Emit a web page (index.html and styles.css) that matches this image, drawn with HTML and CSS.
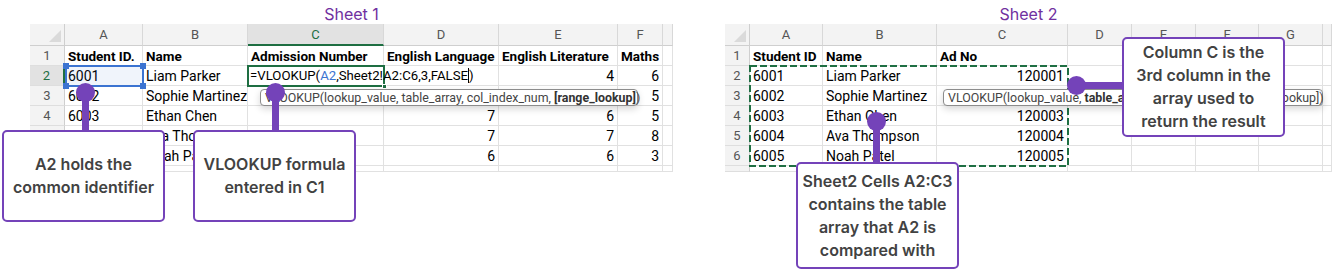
FILE: index.html
```html
<!DOCTYPE html>
<html>
<head>
<meta charset="utf-8">
<link rel="stylesheet" href="styles.css">
</head>
<body>
<div class="page">
  <section class="panel panel-1">
    <h2 class="title">Sheet 1</h2>
    <div class="sheet sheet-1">
      <div class="hd corner"></div>
      <div class="hd">A</div><div class="hd">B</div><div class="hd active-col">C</div><div class="hd">D</div><div class="hd">E</div><div class="hd">F</div><div class="hd"></div>

      <div class="rn">1</div>
      <div class="c b">Student ID.</div><div class="c b">Name</div><div class="c b">Admission Number</div><div class="c b">English Language</div><div class="c b">English Literature</div><div class="c b">Maths</div><div class="c"></div>

      <div class="rn active-row">2</div>
      <div class="c">6001</div><div class="c">Liam Parker</div><div class="c"></div><div class="c"></div><div class="c n">4</div><div class="c n">6</div><div class="c"></div>

      <div class="rn">3</div>
      <div class="c">6002</div><div class="c">Sophie Martinez</div><div class="c"></div><div class="c"></div><div class="c"></div><div class="c n">5</div><div class="c"></div>

      <div class="rn">4</div>
      <div class="c">6003</div><div class="c">Ethan Chen</div><div class="c"></div><div class="c n">7</div><div class="c n">6</div><div class="c n">5</div><div class="c"></div>

      <div class="rn">5</div>
      <div class="c">6004</div><div class="c">Ava Thompson</div><div class="c"></div><div class="c n">7</div><div class="c n">7</div><div class="c n">8</div><div class="c"></div>

      <div class="rn">6</div>
      <div class="c">6005</div><div class="c">Noah Patel</div><div class="c"></div><div class="c n">6</div><div class="c n">6</div><div class="c n">3</div><div class="c"></div>

      <div class="rn">7</div>
      <div class="c"></div><div class="c"></div><div class="c"></div><div class="c"></div><div class="c"></div><div class="c"></div><div class="c"></div>
    </div>

    <div class="ref-box">
      <span class="h tl"></span><span class="h tr"></span><span class="h bl"></span><span class="h br"></span>
    </div>
    <div class="editor">
      <span class="formula">=VLOOKUP(<span class="ref">A2</span>,Sheet2!A2:C6,3,FALSE<span class="caret"></span>)</span>
      <span class="fill-handle"></span>
    </div>
    <div class="tip tip-1">VLOOKUP(lookup_value, table_array, col_index_num, <b>[range_lookup]</b>)</div>

    <div class="stem stem-1"></div><div class="dot dot-1"></div>
    <div class="stem stem-2"></div><div class="dot dot-2"></div>
    <div class="callout callout-1">A2 holds the<br>common identifier</div>
    <div class="callout callout-2">VLOOKUP formula<br>entered in C1</div>
  </section>

  <section class="panel panel-2">
    <h2 class="title">Sheet 2</h2>
    <div class="sheet sheet-2">
      <div class="hd corner"></div>
      <div class="hd">A</div><div class="hd">B</div><div class="hd">C</div><div class="hd">D</div><div class="hd">E</div><div class="hd">F</div><div class="hd">G</div><div class="hd"></div>

      <div class="rn">1</div>
      <div class="c b">Student ID</div><div class="c b">Name</div><div class="c b">Ad No</div><div class="c"></div><div class="c"></div><div class="c"></div><div class="c"></div><div class="c"></div>

      <div class="rn">2</div>
      <div class="c">6001</div><div class="c">Liam Parker</div><div class="c n">120001</div><div class="c"></div><div class="c"></div><div class="c"></div><div class="c"></div><div class="c"></div>

      <div class="rn">3</div>
      <div class="c">6002</div><div class="c">Sophie Martinez</div><div class="c n">120002</div><div class="c"></div><div class="c"></div><div class="c"></div><div class="c"></div><div class="c"></div>

      <div class="rn">4</div>
      <div class="c">6003</div><div class="c">Ethan Chen</div><div class="c n">120003</div><div class="c"></div><div class="c"></div><div class="c"></div><div class="c"></div><div class="c"></div>

      <div class="rn">5</div>
      <div class="c">6004</div><div class="c">Ava Thompson</div><div class="c n">120004</div><div class="c"></div><div class="c"></div><div class="c"></div><div class="c"></div><div class="c"></div>

      <div class="rn">6</div>
      <div class="c">6005</div><div class="c">Noah Patel</div><div class="c n">120005</div><div class="c"></div><div class="c"></div><div class="c"></div><div class="c"></div><div class="c"></div>

      <div class="rn">7</div>
      <div class="c"></div><div class="c"></div><div class="c"></div><div class="c"></div><div class="c"></div><div class="c"></div><div class="c"></div><div class="c"></div>
    </div>

    <svg class="marquee" width="320" height="102" viewBox="0 0 320 102">
      <rect x="1" y="1" width="318" height="100" fill="none" stroke="#1f6f43" stroke-width="2" stroke-dasharray="7 3"/>
    </svg>
    <div class="tip tip-2">VLOOKUP(lookup_value, <b>table_array</b>, col_index_num, [range_lookup])</div>

    <div class="stem stem-3"></div><div class="dot dot-3"></div>
    <div class="arm arm-4"></div><div class="dot dot-4"></div>
    <div class="callout callout-3">Sheet2 Cells A2:C3<br>contains the table<br>array that A2 is<br>compared with</div>
    <div class="callout callout-4">Column C is the<br>3rd column in the<br>array used to<br>return the result</div>
  </section>
</div>
</body>
</html>
```

FILE: styles.css
```css
* { box-sizing: border-box; }

html, body {
  margin: 0;
  padding: 0;
  background: #ffffff;
}

body {
  width: 1332px;
  height: 272px;
  overflow: hidden;
}

.page {
  display: flex;
  gap: 52px;
  padding-left: 30px;
  height: 272px;
}

.panel {
  position: relative;
  flex: none;
}

.panel-1 { width: 643px; }
.panel-2 { width: 607px; }

.title {
  margin: 0;
  height: 24px;
  padding-top: 4px;
  font-family: Inter, "Noto Sans", sans-serif;
  font-weight: 400;
  font-size: 16px;
  line-height: 20px;
  color: #7030a0;
  text-align: center;
}

.sheet {
  display: grid;
  grid-template-rows: 22px repeat(6, 20px) 6px;
  overflow: hidden;
  font-family: Roboto, "Liberation Sans", sans-serif;
  font-size: 14px;
  color: #000000;
}

.sheet-1 { grid-template-columns: 35px 78px 105px 136px 115px 119px 45px 10px; }
.sheet-2 { grid-template-columns: 25px 73px 114px 131px 64px 64px 63px 64px 9px; }

.hd {
  background: #f3f3f3;
  border-right: 1px solid #d8d8d8;
  border-bottom: 1px solid #cfcfcf;
  color: #555555;
  font-size: 13px;
  line-height: 21px;
  text-align: center;
}

.hd.corner {
  position: relative;
  border-right: 1px solid #cfcfcf;
}

.hd.corner::after {
  content: "";
  position: absolute;
  right: 3px;
  bottom: 3px;
  width: 0;
  height: 0;
  border-left: 12px solid transparent;
  border-bottom: 12px solid #dadada;
}

.hd.active-col {
  background: #e2e2e2;
  border-bottom: 2px solid #1e6e42;
  color: #1e6e42;
}

.rn {
  background: #f3f3f3;
  border-right: 1px solid #cfcfcf;
  border-bottom: 1px solid #dedede;
  color: #555555;
  font-size: 13px;
  line-height: 19px;
  text-align: center;
  overflow: hidden;
}

.rn.active-row {
  background: #e2e2e2;
  border-right: 2px solid #1e6e42;
  color: #1e6e42;
}

.c {
  border-right: 1px solid #e1e1e1;
  border-bottom: 1px solid #e1e1e1;
  padding: 0 3px;
  line-height: 20px;
  white-space: nowrap;
  overflow: hidden;
}

.c.b { font-weight: 700; font-size: 13.5px; }
.c.n { text-align: right; }

/* A2 reference highlight */
.ref-box {
  position: absolute;
  left: 35px;
  top: 65px;
  width: 79px;
  height: 22px;
  border: 2px solid #3b73d1;
  background: rgba(59, 115, 209, 0.08);
}

.ref-box .h {
  position: absolute;
  width: 6px;
  height: 6px;
  background: #3b73d1;
}
.ref-box .tl { left: -4px; top: -4px; }
.ref-box .tr { right: -4px; top: -4px; }
.ref-box .bl { left: -4px; bottom: -4px; }
.ref-box .br { right: -4px; bottom: -4px; }

/* C2 editor */
.editor {
  position: absolute;
  left: 217px;
  top: 65px;
  width: 138px;
  height: 22px;
  border: 2px solid #1e6e42;
  background: #ffffff;
}

.formula {
  position: absolute;
  left: 1px;
  top: 0;
  white-space: nowrap;
  font-family: Roboto, "Liberation Sans", sans-serif;
  font-size: 13.2px;
  line-height: 18px;
  color: #000000;
}

.formula .ref { color: #3b73d1; }

.caret {
  display: inline-block;
  width: 1px;
  height: 15px;
  background: #000000;
  vertical-align: -3px;
}

.fill-handle {
  position: absolute;
  right: -4px;
  bottom: -4px;
  width: 5px;
  height: 5px;
  background: #1e6e42;
  border: 1px solid #ffffff;
}

/* tooltips */
.tip {
  position: absolute;
  top: 89px;
  height: 17px;
  padding: 0 4px;
  background: #ffffff;
  border: 1px solid #8c8c8c;
  border-radius: 4px;
  box-shadow: 0 3px 7px rgba(0, 0, 0, 0.16);
  font-family: Roboto, "Liberation Sans", sans-serif;
  font-size: 12.4px;
  line-height: 15px;
  color: #444444;
  white-space: nowrap;
}

.tip b { color: #333333; }

.tip-1 { left: 230px; width: 378px; }
.tip-2 { left: 218px; width: 380px; }

/* marquee */
.marquee {
  position: absolute;
  left: 24px;
  top: 65px;
}

/* connectors */
.dot {
  position: absolute;
  width: 19px;
  height: 19px;
  border-radius: 50%;
  background: #7443b9;
}

.stem, .arm {
  position: absolute;
  background: #7443b9;
}

.dot-1 { left: 46px; top: 83px; }
.stem-1 { left: 52px; top: 92px; width: 7px; height: 40px; }

.dot-2 { left: 236px; top: 83px; }
.stem-2 { left: 242px; top: 92px; width: 7px; height: 40px; }

.dot-3 { left: 142px; top: 112px; }
.stem-3 { left: 148px; top: 121px; width: 7px; height: 43px; }

.dot-4 { left: 342px; top: 76px; }
.arm-4 { left: 351px; top: 82px; width: 48px; height: 7px; }

/* callouts */
.callout {
  position: absolute;
  display: flex;
  align-items: center;
  justify-content: center;
  text-align: center;
  background: #ffffff;
  border: 2px solid #7443b9;
  border-radius: 5px;
  font-family: Inter, "Noto Sans", sans-serif;
  font-weight: 600;
  font-size: 16px;
  line-height: 23px;
  color: #424242;
  white-space: nowrap;
}

.callout-1 { left: -28px; top: 130px; width: 163px; height: 92px; }
.callout-2 { left: 163px; top: 130px; width: 163px; height: 92px; }
.callout-3 { left: 71px; top: 162px; width: 163px; height: 107px; }
.callout-4 { left: 397px; top: 37px; width: 163px; height: 100px; }
```
